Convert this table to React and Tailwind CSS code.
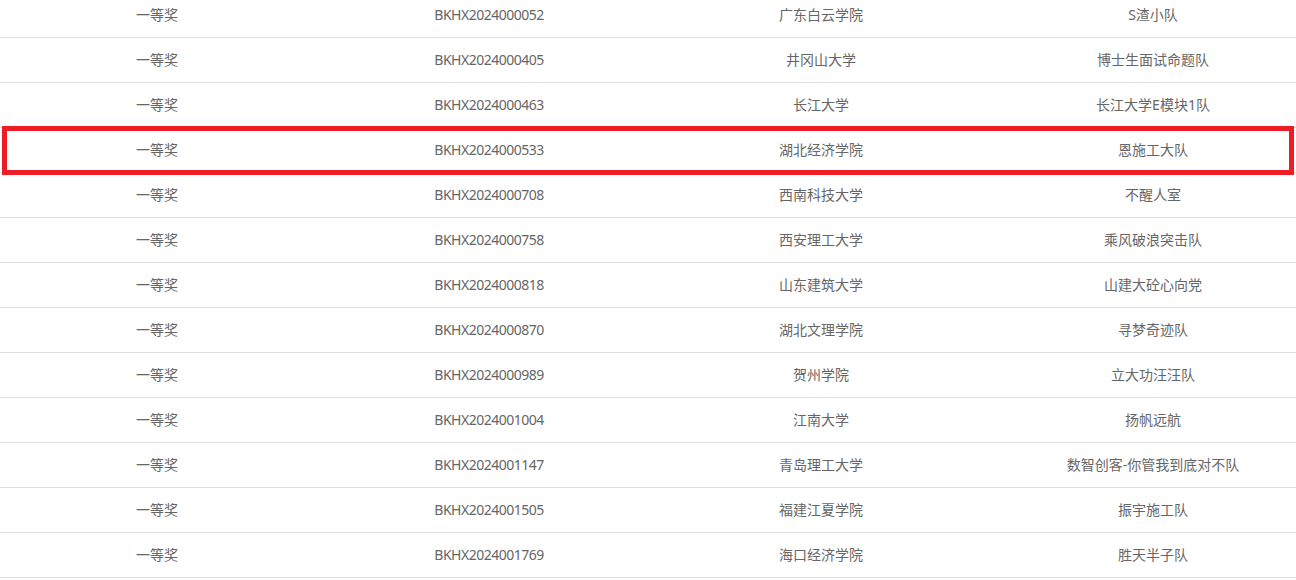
const rows = [
  ['BKHX2024000052', '广东白云学院', 'S渣小队'],
  ['BKHX2024000405', '井冈山大学', '博士生面试命题队'],
  ['BKHX2024000463', '长江大学', '长江大学E模块1队'],
  ['BKHX2024000533', '湖北经济学院', '恩施工大队'],
  ['BKHX2024000708', '西南科技大学', '不醒人室'],
  ['BKHX2024000758', '西安理工大学', '乘风破浪突击队'],
  ['BKHX2024000818', '山东建筑大学', '山建大砼心向党'],
  ['BKHX2024000870', '湖北文理学院', '寻梦奇迹队'],
  ['BKHX2024000989', '贺州学院', '立大功汪汪队'],
  ['BKHX2024001004', '江南大学', '扬帆远航'],
  ['BKHX2024001147', '青岛理工大学', '数智创客-你管我到底对不队'],
  ['BKHX2024001505', '福建江夏学院', '振宇施工队'],
  ['BKHX2024001769', '海口经济学院', '胜天半子队'],
]

export default function App() {
  return (
    <div className="w-[1296px] h-[580px] overflow-hidden bg-white"
      style={{ fontFamily: '"Noto Sans", "Noto Sans CJK SC", sans-serif' }}>
      <div className="relative w-[1328px] ml-[-9px] mt-[-7px] text-[14px] text-[#666]">
        {rows.map((r, i) => (
          <div key={r[0]} className="relative grid grid-cols-[332px_332px_332px_332px] h-[45px] border-b border-[#ddd]">
            <div className="flex items-center justify-center pb-[2px]">一等奖</div>
            <div className="flex items-center justify-center pb-[2px] tracking-[-0.5px]">{r[0]}</div>
            <div className="flex items-center justify-center pb-[2px]">{r[1]}</div>
            <div className="flex items-center justify-center pb-[2px]">{r[2]}</div>
            {i === 3 && (
              <div className="absolute left-[11px] w-[1292px] top-[-2px] h-[49px] border-[5px] border-[#ee1c25]" />
            )}
          </div>
        ))}
      </div>
    </div>
  )
}
